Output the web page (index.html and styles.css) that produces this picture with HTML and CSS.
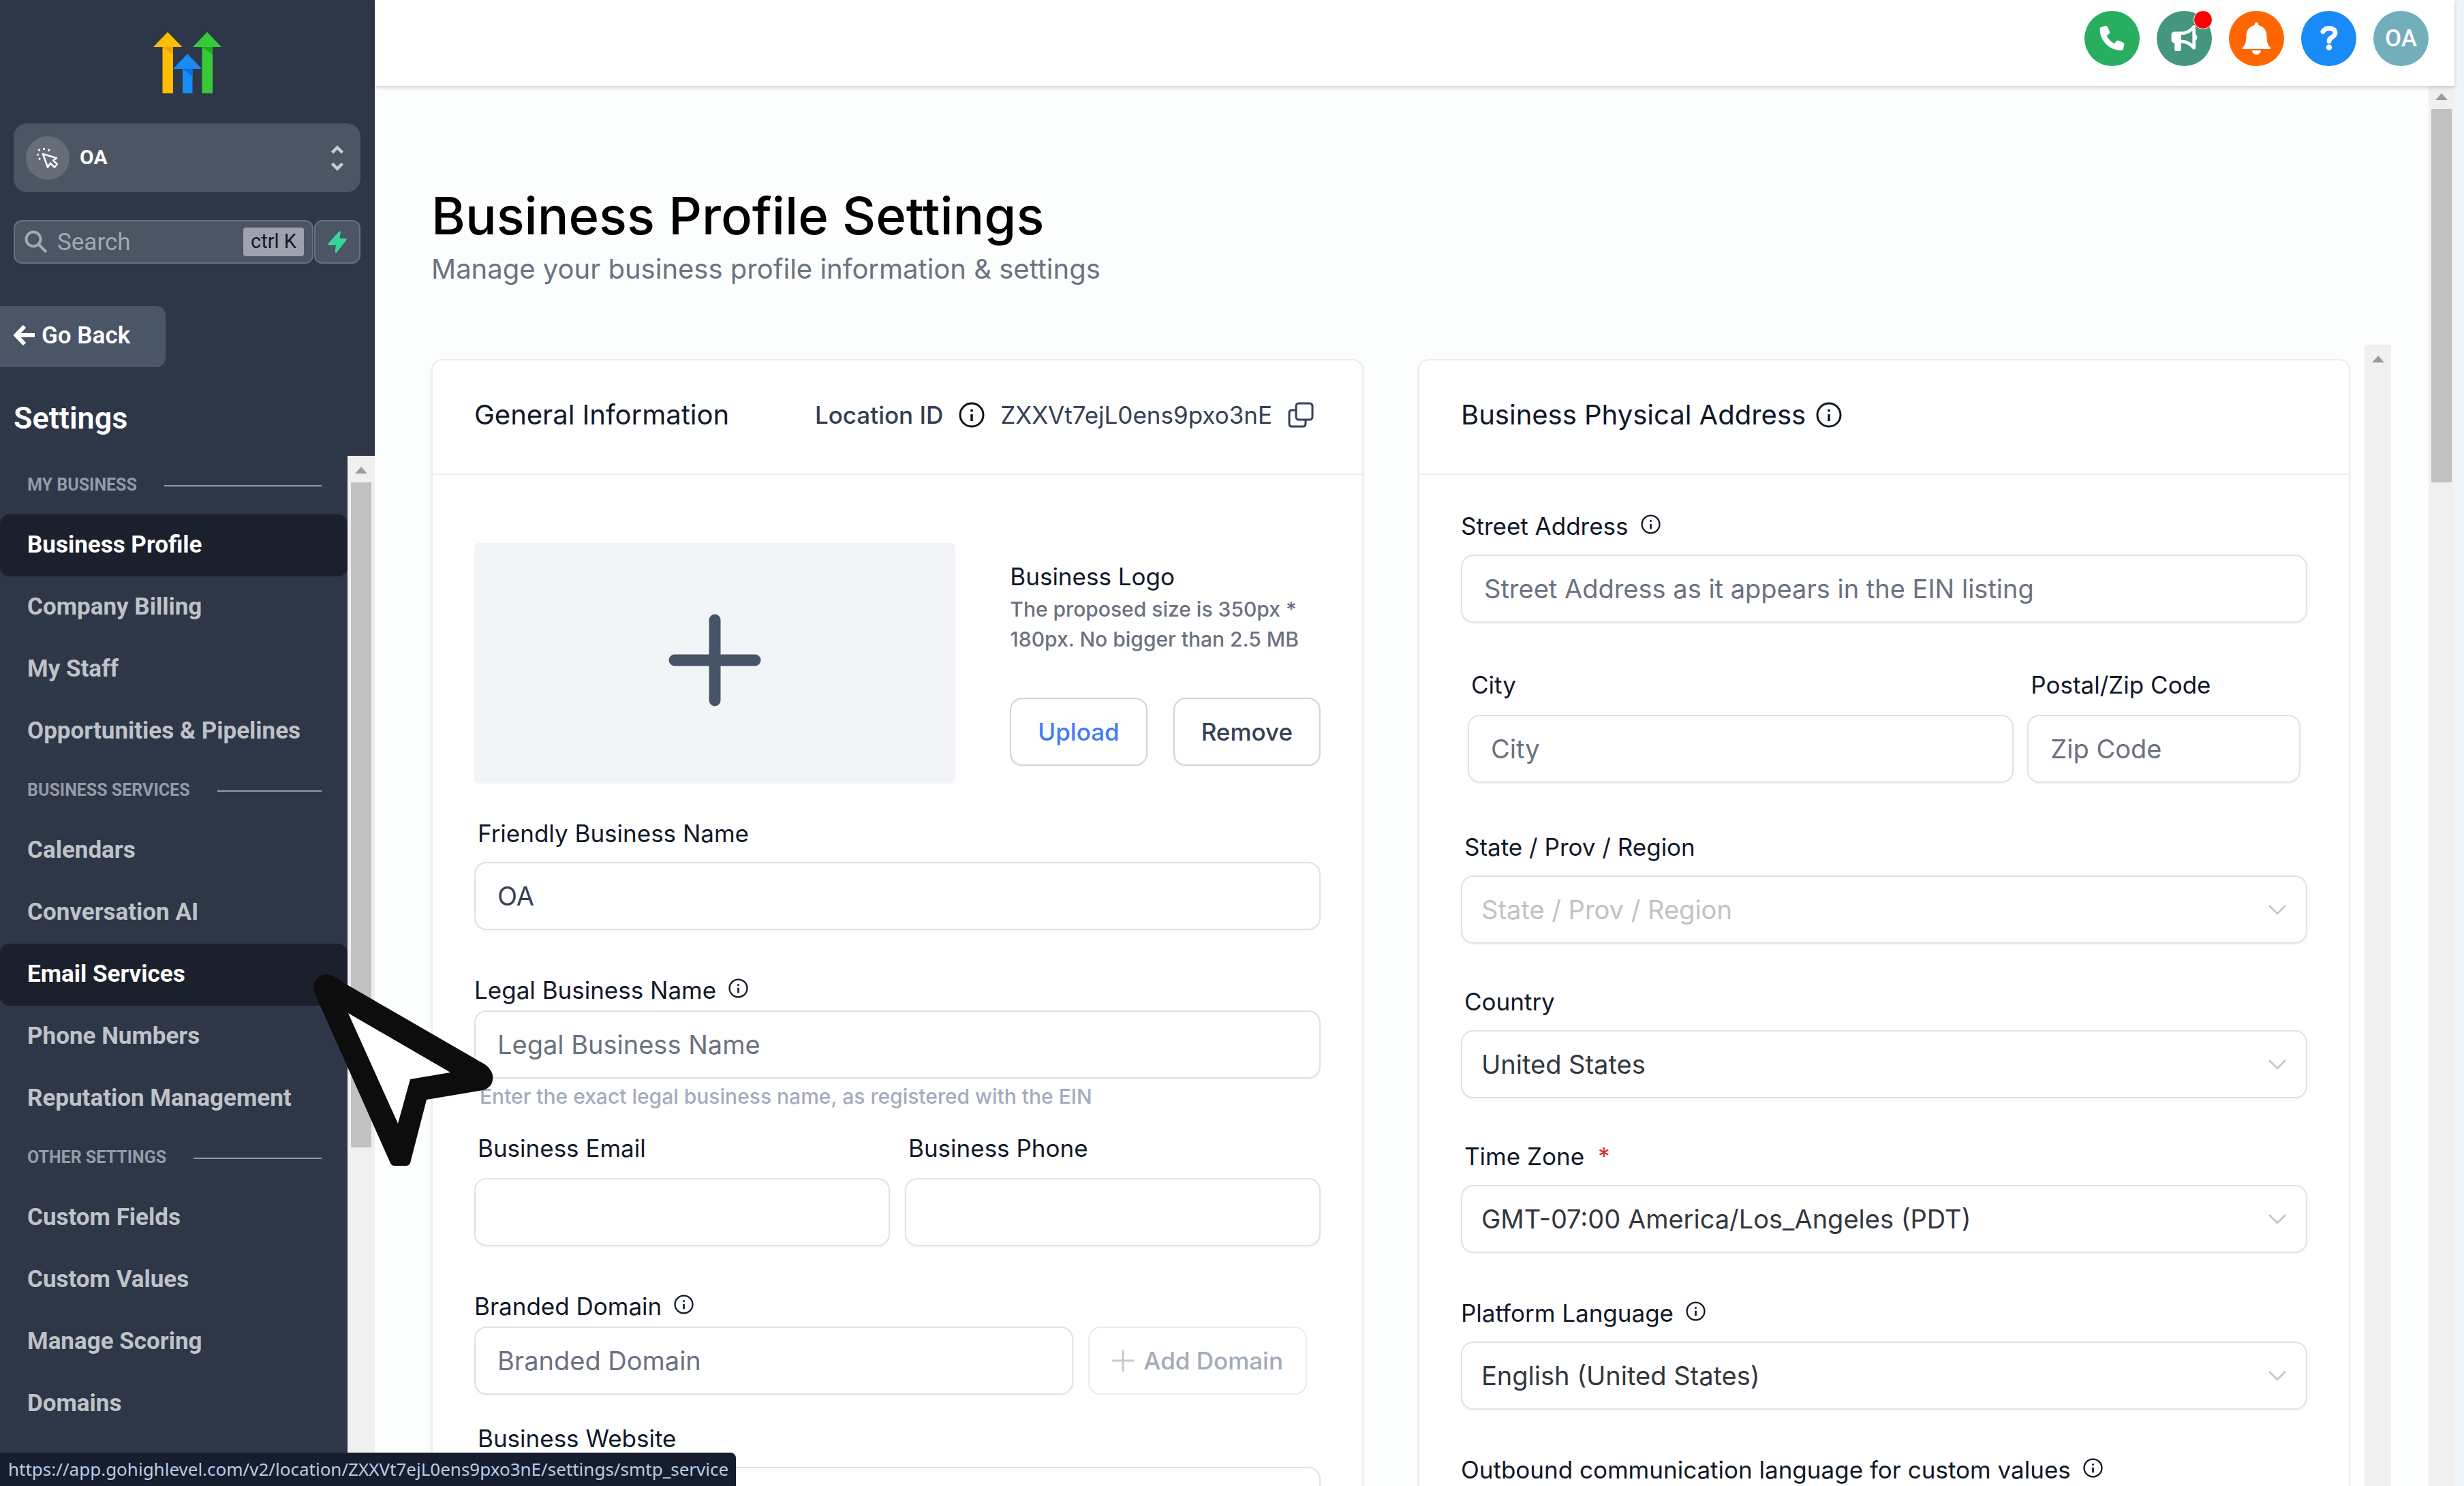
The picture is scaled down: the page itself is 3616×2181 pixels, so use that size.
FILE: index.html
```html
<!DOCTYPE html>
<html lang="en">
<head>
<meta charset="utf-8">
<title>Business Profile Settings</title>
<link rel="stylesheet" href="styles.css">
</head>
<body>
<svg class="defs" width="0" height="0" aria-hidden="true">
  <symbol id="info" viewBox="0 0 38 38"><circle cx="19" cy="19" r="17" fill="none" stroke="currentColor" stroke-width="3"/><circle cx="19" cy="12.500" r="2" fill="currentColor"/><path d="M19 18v10" stroke="currentColor" stroke-width="3.500"/></symbol>
  <symbol id="chevron" viewBox="0 0 28 16"><path d="M2 2l12 12L26 2" fill="none" stroke="currentColor" stroke-width="2.500"/></symbol>
  <symbol id="up" viewBox="0 0 18 10"><path d="M9 0l9 10H0z" fill="currentColor"/></symbol>
</svg>

<div class="app">
  <aside class="sidebar">
    <svg class="logo" viewBox="0 0 100 90" role="img" aria-label="HighLevel">
      <path d="M21 0l21.500 22H29v68H13.500V22H0z" fill="#ffbc00"/><path d="M13.500 22H29v11z" fill="#e8a311"/>
      <path d="M50 32l21 22H57.500v36H43V54H29z" fill="#188bf6"/><path d="M43 54h14.500v11z" fill="#0f6fdc"/>
      <path d="M79 0l21 22H87v68H71.500V22H58z" fill="#37ca37"/><path d="M71.500 22H87v11z" fill="#1fa81f"/>
    </svg>
    <button class="account" type="button">
      <span class="account-icon"><svg viewBox="0 0 32 32" fill="none" stroke="#fff" stroke-width="2.500" stroke-linejoin="round"><path d="M9 10l20 6-5 3.500 6 5.500-4 4.500-6-6-4 6z"/><path d="M0 11h3M2.500 3l2 2.500M10.500 1v3M18.500 3l-1.500 3M3 18l2-2"/></svg></span>
      <span class="account-name">OA</span>
      <svg class="account-sort" viewBox="0 0 18 38" fill="none" stroke="#c9ccd1" stroke-width="4.500"><path d="M1.500 11L9 3.500l7.500 7.500M1.500 27L9 34.500l7.500-7.500"/></svg>
    </button>
    <div class="search-row">
      <label class="search">
        <svg class="search-icon" viewBox="0 0 34 34" fill="none" stroke="#a3a9b5" stroke-width="4"><circle cx="13" cy="13" r="10.500"/><path d="M20.500 20.500L32 32"/></svg>
        <input type="text" placeholder="Search" aria-label="Search">
        <kbd>ctrl K</kbd>
      </label>
      <button class="bolt" type="button" aria-label="Quick actions"><svg viewBox="0 0 28 32"><path d="M17 0L1 18q-2 3 1.500 3H12l-1.500 10q1.500 2 3 0L27 14q1.500-3-1.500-3H17.500L19 1z" fill="#36d399"/></svg></button>
    </div>
    <a class="back" href="#"><svg viewBox="0 0 32 30" fill="none" stroke="#fff" stroke-width="6"><path d="M17 2L4.500 15 17 28M5 15h27"/></svg>Go Back</a>
    <h2 class="sidebar-title">Settings</h2>
    <div class="nav-scroll">
      <nav class="nav">
        <h3>MY BUSINESS</h3>
        <a class="on" href="#">Business Profile</a>
        <a href="#">Company Billing</a>
        <a href="#">My Staff</a>
        <a href="#">Opportunities &amp; Pipelines</a>
        <h3>BUSINESS SERVICES</h3>
        <a href="#">Calendars</a>
        <a href="#">Conversation AI</a>
        <a class="on" href="#">Email Services</a>
        <a href="#">Phone Numbers</a>
        <a href="#">Reputation Management</a>
        <h3>OTHER SETTINGS</h3>
        <a href="#">Custom Fields</a>
        <a href="#">Custom Values</a>
        <a href="#">Manage Scoring</a>
        <a href="#">Domains</a>
      </nav>
      <div class="bar bar-nav"><svg><use href="#up"/></svg><i></i></div>
    </div>
  </aside>

  <div class="main">
    <header class="topbar">
      <button class="round phone" type="button" aria-label="Phone"><svg width="37" height="36" viewBox="0 0 512 512"><path fill="#fff" d="M164.900 24.600c-7.700-18.600-28-28.500-47.400-23.200l-88 24C12.100 30.200 0 46 0 64C0 311.400 200.600 512 448 512c18 0 33.800-12.100 38.600-29.500l24-88c5.300-19.400-4.600-39.700-23.200-47.400l-96-40c-16.300-6.800-35.200-2.100-46.300 11.600L304.700 368C234.300 334.700 177.300 277.700 144 207.300L193.300 167c13.700-11.200 18.400-30 11.600-46.300l-40-96z"/></svg></button>
      <button class="round news" type="button" aria-label="Announcements"><svg width="41" height="38" viewBox="0 0 512 512"><path fill="#fff" d="M480 32c0-12.900-7.800-24.600-19.800-29.600s-25.700-2.200-34.900 6.900L381.700 53c-48 48-113.100 75-181 75H64c-35.300 0-64 28.700-64 64v96c0 35.300 28.700 64 64 64v128c0 17.700 14.300 32 32 32h64c17.700 0 32-14.300 32-32V352l8.700 0c67.900 0 133 27 181 75l43.600 43.600c9.200 9.200 22.900 11.900 34.900 6.900s19.800-16.600 19.800-29.600V300.400c18.600-8.800 32-32.500 32-60.400s-13.400-51.600-32-60.400V32zm-64 76.700V371.300C357.200 317.800 280.500 288 200.700 288H192V192h8.700c79.800 0 156.500-29.800 215.300-83.300z"/></svg><span class="dot"></span></button>
      <button class="round bell" type="button" aria-label="Notifications"><svg width="41" height="47" viewBox="0 0 41 47"><path fill="#fff" d="M20.500 0c2 0 3 2 3 4 8 2 12 8 12 16 0 8 1 12 5.500 17v2H0v-2c4.500-5 5.500-9 5.500-17 0-8 4-14 12-16 0-2 1-4 3-4zM14 41h13c0 3.500-3 6-6.500 6S14 44.500 14 41z"/></svg></button>
      <button class="round help" type="button" aria-label="Help"><svg width="26" height="36" viewBox="0 0 26 36"><path d="M4 8.500C6 5 9 3.500 13 3.500c5 0 9 2.500 9 7 0 6-9 5.500-9 12" fill="none" stroke="#fff" stroke-width="7" stroke-linecap="round"/><circle cx="13" cy="31.500" r="4.300" fill="#fff"/></svg></button>
      <button class="round avatar" type="button">OA</button>
    </header>

    <div class="page">
      <main class="content">
        <h1>Business Profile Settings</h1>
        <p class="lead">Manage your business profile information &amp; settings</p>
        <div class="scroller">
          <form class="cards">
            <section class="card">
              <header class="card-head">
                <h2>General Information</h2>
                <div class="location">
                  <span>Location ID</span>
                  <svg class="ico"><use href="#info"/></svg>
                  <span class="location-id">ZXXVt7ejL0ens9pxo3nE</span>
                  <button class="copy" type="button" aria-label="Copy"><svg class="ico" viewBox="0 0 38 38" fill="none" stroke="#344054" stroke-width="3"><rect x="12" y="2" width="24" height="24" rx="4"/><path d="M12 12H6q-4 0-4 4v16q0 4 4 4h16q4 0 4-4v-6"/></svg></button>
                </div>
              </header>
              <div class="card-body general">
                <div class="logo-row">
                  <div class="logo-drop"><svg viewBox="0 0 136 136" stroke="#475467" stroke-width="17" stroke-linecap="round"><path d="M68 9v118M9 68h118"/></svg></div>
                  <div class="logo-info">
                    <h3>Business Logo</h3>
                    <p>The proposed size is 350px *<br>180px. No bigger than 2.5 MB</p>
                    <div class="logo-actions">
                      <button class="btn primary" type="button">Upload</button>
                      <button class="btn" type="button">Remove</button>
                    </div>
                  </div>
                </div>
                <div class="field first">
                  <label for="fname">Friendly Business Name</label>
                  <input id="fname" type="text" value="OA">
                </div>
                <div class="field info tight">
                  <label for="lname">Legal Business Name <svg><use href="#info"/></svg></label>
                  <input id="lname" type="text" placeholder="Legal Business Name">
                  <p class="hint">Enter the exact legal business name, as registered with the EIN</p>
                </div>
                <div class="pair contact">
                  <div class="field"><label for="email">Business Email</label><input id="email" type="email"></div>
                  <div class="field"><label for="tel">Business Phone</label><input id="tel" type="tel"></div>
                </div>
                <div class="field info tight">
                  <label for="domain">Branded Domain <svg><use href="#info"/></svg></label>
                  <div class="domain-row">
                    <input id="domain" type="text" placeholder="Branded Domain">
                    <button class="btn faded" type="button" disabled><svg viewBox="0 0 32 32" stroke="#c4c9d2" stroke-width="3"><path d="M16 0v32M0 16h32"/></svg>Add Domain</button>
                  </div>
                </div>
                <div class="field website">
                  <label for="site">Business Website</label>
                  <input id="site" type="url">
                </div>
              </div>
            </section>

            <section class="card">
              <header class="card-head address-head">
                <h2>Business Physical Address</h2>
                <svg class="ico"><use href="#info"/></svg>
              </header>
              <div class="card-body address">
                <div class="field info first">
                  <label for="street">Street Address <svg><use href="#info"/></svg></label>
                  <input id="street" type="text" placeholder="Street Address as it appears in the EIN listing">
                </div>
                <div class="pair city">
                  <div class="field"><label for="city">City</label><input id="city" type="text" placeholder="City"></div>
                  <div class="field"><label for="zip">Postal/Zip Code</label><input id="zip" type="text" placeholder="Zip Code"></div>
                </div>
                <div class="field region">
                  <label for="state">State / Prov / Region</label>
                  <div class="select empty"><select id="state"><option>State / Prov / Region</option></select><svg><use href="#chevron"/></svg></div>
                </div>
                <div class="field">
                  <label for="country">Country</label>
                  <div class="select"><select id="country"><option>United States</option></select><svg><use href="#chevron"/></svg></div>
                </div>
                <div class="field">
                  <label for="tz">Time Zone <span class="req">*</span></label>
                  <div class="select"><select id="tz"><option>GMT-07:00 America/Los_Angeles (PDT)</option></select><svg><use href="#chevron"/></svg></div>
                </div>
                <div class="field info">
                  <label for="lang">Platform Language <svg><use href="#info"/></svg></label>
                  <div class="select"><select id="lang"><option>English (United States)</option></select><svg><use href="#chevron"/></svg></div>
                </div>
                <div class="field info">
                  <label for="outlang">Outbound communication language for custom values <svg><use href="#info"/></svg></label>
                  <div class="select"><select id="outlang"><option>English (United States)</option></select><svg><use href="#chevron"/></svg></div>
                </div>
              </div>
            </section>
          </form>
          <div class="bar bar-form"><svg><use href="#up"/></svg></div>
        </div>
      </main>
      <div class="bar bar-page"><svg><use href="#up"/></svg><i></i></div>
    </div>
  </div>
</div>

<div class="status">https://app.gohighlevel.com/v2/location/ZXXVt7ejL0ens9pxo3nE/settings/smtp_service</div>
<svg class="pointer" viewBox="0 0 270 290" aria-hidden="true">
  <path fill="#0d0d0d" d="M6 31C2 14 14 2 31 6L52 19 258 138Q270 148 268 160 267 171 254 175L171 189 147 282Q145 286 141 286H124Q119 286 117 280z"/>
  <path fill="#fff" d="M56 62L206 149 147 159 129 224z"/>
</svg>
</body>
</html>
```
FILE: styles.css
```css
* { box-sizing: border-box; }
body { margin: 0; height: 100vh; overflow: hidden; font-family: Inter, "Liberation Sans", sans-serif; color: #101828; background: #f0f5fa; }
h1, h2, h3, p { margin: 0; font-weight: 400; }
button, input, select { font: inherit; color: inherit; margin: 0; }
button { padding: 0; border: 0; background: none; }
a { color: inherit; text-decoration: none; }
svg { display: block; flex: none; }
.defs { position: absolute; }

.app { display: flex; height: 100vh; padding-right: 14px; }

/* Sidebar */
.sidebar { flex: none; width: 550px; display: flex; flex-direction: column; padding-top: 47px; background: #2d3748; font-family: Roboto, "Liberation Sans", sans-serif; color: #fff; }
.logo { width: 100px; height: 90px; align-self: center; }
.account { display: flex; align-items: center; height: 101px; margin: 44px 21px 0 20px; padding: 0 25px 0 18px; border-radius: 20px; background: #4c5563; }
.account-icon { display: flex; align-items: center; justify-content: center; width: 64px; height: 64px; border-radius: 50%; background: #666d79; }
.account-icon svg { width: 32px; height: 32px; }
.account-name { margin-left: 15px; padding-bottom: 2px; font-size: 30px; font-weight: 700; }
.account-sort { width: 18px; height: 38px; margin-left: auto; }
.search-row { display: flex; gap: 1px; margin: 41px 21px 0 20px; }
.search { flex: 1; min-width: 0; display: flex; align-items: center; height: 64px; padding: 0 12px 0 14px; border: 2px solid #667080; border-radius: 12px; background: #4b5563; }
.search-icon { width: 34px; height: 34px; }
.search input { flex: 1; width: 100%; min-width: 0; margin-left: 14px; padding: 0; border: 0; outline: 0; background: none; font-size: 35px; }
.search input::placeholder { color: #a0a8b5; opacity: 1; }
.search kbd { flex: none; height: 42px; padding: 0 11px; border-radius: 4px; background: #9ca3af; color: #111827; font: 29px/40px Roboto, "Liberation Sans", sans-serif; }
.bolt { flex: none; display: flex; align-items: center; justify-content: center; width: 68px; height: 64px; border: 2px solid #667080; border-radius: 12px; background: #4b5563; }
.bolt svg { width: 28px; height: 32px; }
.back { display: flex; align-items: center; gap: 10px; width: 243px; height: 90px; margin-top: 62px; padding: 0 0 4px 19px; border-radius: 0 14px 14px 0; background: #4a5568; font-size: 35px; font-weight: 600; }
.back svg { width: 32px; height: 30px; }
.sidebar-title { margin: 47px 0 0 20px; font-size: 45px; line-height: 56px; font-weight: 600; }
.nav-scroll { flex: 1; min-height: 0; display: flex; margin-top: 27px; overflow: hidden; }
.nav { flex: 1; padding-top: 2px; overflow: hidden; }
.nav h3 { display: flex; align-items: center; gap: 40px; height: 84px; padding: 0 38px 4px 40px; font-size: 25px; font-weight: 700; color: #949ba8; }
.nav h3::after { content: ""; flex: 1; height: 2px; margin-top: 4px; background: #949ba8; }
.nav a { display: block; height: 91px; padding-left: 40px; border-radius: 14px; font-size: 35px; line-height: 90px; font-weight: 700; color: #bfc2c7; }
.nav a.on { background: #1a202c; color: #fff; }

/* Scroll tracks */
.bar { flex: none; display: flex; flex-direction: column; align-items: center; background: #f0f0f0; color: #9c9c9c; }
.bar svg { width: 18px; height: 10px; }
.bar i { background: #c1c1c1; }
.bar-nav { width: 40px; padding-top: 16px; }
.bar-nav i { width: 30px; height: 976px; margin-top: 13px; }
.bar-form { width: 39px; padding-top: 16px; }
.bar-page { width: 38px; padding-top: 11px; }
.bar-page i { width: 30px; height: 548px; margin-top: 13px; }

/* Top bar */
.main { flex: 1; min-width: 0; display: flex; flex-direction: column; }
.topbar { position: relative; flex: none; display: flex; justify-content: flex-end; align-items: center; gap: 25px; height: 126px; padding: 0 38px 14px 0; background: #fff; box-shadow: 0 2px 6px rgba(0, 0, 0, .2); }
.round { position: relative; display: flex; align-items: center; justify-content: center; width: 81px; height: 81px; border-radius: 50%; color: #fff; font: 500 35px Roboto, "Liberation Sans", sans-serif; }
.phone { background: #27ae60; }
.news { background: #44967f; }
.bell { background: #ff6600; }
.help { background: #188bf6; }
.avatar { background: #73aebc; }
.dot { position: absolute; top: -1px; right: -1px; width: 28px; height: 28px; border: 1px solid #fff; border-radius: 50%; background: #f00; }

/* Page */
.page { flex: 1; min-height: 0; display: flex; }
.content { flex: 1; min-width: 0; display: flex; flex-direction: column; padding: 145px 55px 0 83px; background: #fcfefe; overflow: hidden; }
h1 { font-size: 76px; line-height: 90px; font-weight: 500; color: #000; }
.lead { margin-top: 10px; font-size: 40px; line-height: 48px; color: #6b7280; }
.scroller { flex: 1; min-height: 0; display: flex; gap: 21px; margin-top: 87px; }
.cards { flex: 1; min-width: 0; display: grid; grid-template-columns: 1fr 1fr; align-items: start; gap: 80px; padding-top: 21px; }
.card { min-width: 0; border: 2px solid #eaecf0; border-radius: 16px; background: #fff; box-shadow: 0 1px 4px rgba(16, 24, 40, .06); }
.card-head { display: flex; align-items: center; justify-content: space-between; height: 168px; padding: 0 71px 7px 61px; border-bottom: 2px solid #eaecf0; }
.card-head h2 { font-size: 40px; line-height: 48px; }
.address-head { justify-content: flex-start; gap: 15px; }
.ico { width: 38px; height: 38px; }
.location { display: flex; align-items: center; gap: 23px; font-size: 35px; font-weight: 500; color: #344054; }
.location-id { font-weight: 400; }
.location .ico { color: #101010; }
.card-body { padding: 0 61px 60px; }
.general { padding-top: 100px; }
.address { padding-top: 53px; }

.logo-row { display: flex; gap: 80px; }
.logo-drop { flex: 1; display: flex; align-items: center; justify-content: center; height: 353px; padding-bottom: 9px; border-radius: 6px; background: #f2f4f8; }
.logo-drop svg { width: 136px; height: 136px; }
.logo-info { flex: none; padding-top: 27px; }
.logo-info h3 { font-size: 35px; line-height: 44px; }
.logo-info p { margin-top: 4px; font-size: 30px; line-height: 44px; font-weight: 500; color: #6b7280; }
.logo-actions { display: flex; gap: 38px; margin-top: 64px; }
.btn { height: 100px; padding: 0 39px; border: 2px solid #d0d5dd; border-radius: 18px; background: #fff; box-shadow: 0 1px 3px rgba(16, 24, 40, .06); font-size: 35px; font-weight: 500; color: #344054; }
.btn.primary { color: #3e7bfa; }

.field { min-width: 0; margin-top: 63px; }
.field.info { margin-top: 66px; }
.field.first, .pair .field { margin-top: 0; }
.general .first { margin-top: 51px; }
.field label { display: flex; align-items: center; height: 44px; margin-bottom: 20px; padding-left: 5px; font-size: 35px; line-height: 44px; }
.field.info label { gap: 18px; padding-left: 0; }
.field.info label svg { width: 29px; height: 29px; margin-bottom: 5px; }
.field.tight label { margin-bottom: 8px; }
.field input, select { display: block; width: 100%; height: 100px; padding: 0 32px; border: 2px solid #e1e2e9; border-radius: 18px; outline: 0; background: #fff; box-shadow: 0 1px 3px rgba(16, 24, 40, .06); font-size: 38px; color: #344054; }
.field input::placeholder { color: #6b7280; opacity: 1; }
.hint { margin-top: 8px; padding-left: 8px; font-size: 30px; line-height: 36px; font-weight: 500; color: #a3abbd; }
.pair { display: grid; grid-template-columns: 1fr 1fr; gap: 22px; margin-top: 36px; }
.pair label { margin-bottom: 22px; }
.city { grid-template-columns: 2fr 1fr; gap: 20px; margin-top: 69px; padding: 0 10px; }
.region { margin-top: 72px; }
.website { margin-top: 42px; }
.domain-row { display: flex; gap: 22px; padding-right: 20px; }
.domain-row input { flex: 1; min-width: 0; }
.btn.faded { display: flex; align-items: center; gap: 15px; padding: 0 33px; border-color: #e9ebf0; color: #a3abb8; box-shadow: none; }
.faded svg { width: 32px; height: 32px; }
.select { display: grid; align-items: center; }
.select > * { grid-area: 1 / 1; }
select { appearance: none; padding: 0 28px; color: #33373d; }
.empty select { color: #c2c2c2; }
.select svg { width: 28px; height: 16px; justify-self: end; margin-right: 30px; color: #c2c2c2; pointer-events: none; }
.req { margin-left: 20px; color: #d92d20; }

/* Overlays */
.status { position: fixed; left: 0; bottom: 0; height: 49px; padding: 0 11px 0 12px; border-radius: 0 8px 0 0; background: #151d2e; color: #bccbe4; font: 26px/49px "Noto Sans", "Open Sans", sans-serif; white-space: nowrap; }
.pointer { position: absolute; left: 455px; top: 1425px; width: 270px; height: 290px; }
```
